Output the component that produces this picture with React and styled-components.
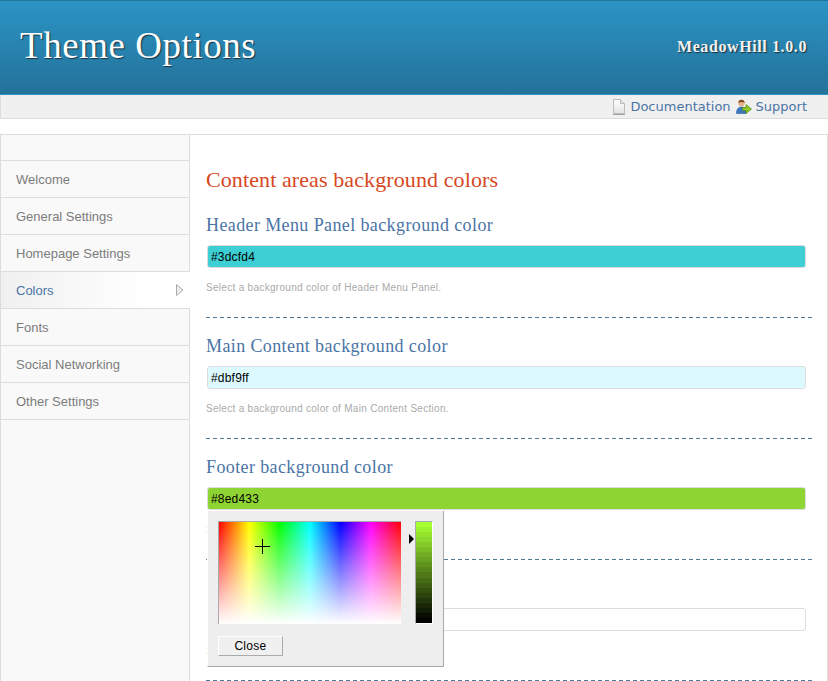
import React from 'react';
import styled, { createGlobalStyle } from 'styled-components';

const GlobalStyle = createGlobalStyle`
  html, body { margin: 0; padding: 0; background: #fff; overflow: hidden; }
  * { box-sizing: border-box; }
`;

const Page = styled.div`
  width: 828px;
  height: 681px;
  overflow: hidden;
  font-family: "Liberation Sans", Arial, sans-serif;
`;

const Header = styled.header`
  height: 95px;
  display: flex;
  align-items: center;
  justify-content: space-between;
  padding: 0 21px 0 20px;
  border-top: 1px solid #20749c;
  border-bottom: 1px solid #2e93c0;
  background: linear-gradient(to bottom, #2b94c4, #237299);
`;

const Title = styled.h1`
  margin: 0 0 4px;
  font: normal 37px/44px "Liberation Serif", serif;
  letter-spacing: 0.55px;
  color: #fff;
  text-shadow: 1px 1px 1px #1a3040;
`;

const Version = styled.div`
  margin-bottom: 2px;
  font: bold 16px/20px "Liberation Serif", serif;
  letter-spacing: 0.6px;
  color: #f2f2f2;
  text-shadow: 1px 1px 1px #1a3040;
`;

const SubBar = styled.nav`
  height: 24px;
  display: flex;
  align-items: center;
  justify-content: flex-end;
  gap: 5px;
  padding-right: 21px;
  background: #f0f0f0;
  border-left: 1px solid #ddd;
  border-bottom: 1px solid #ddd;
`;

const SubLink = styled.a`
  display: flex;
  align-items: center;
  gap: 4px;
  font: 13px/16px "DejaVu Sans", Verdana, sans-serif;
  color: #4a74a5;
`;

const Main = styled.div`
  margin-top: 15px;
  display: flex;
  height: 560px;
  border: 1px solid #ddd;
  border-bottom: 0;
`;

const Sidebar = styled.aside`
  flex: 0 0 189px;
  background: #f9f9f9;
  border-right: 1px solid #ddd;
  padding-top: 25px;
`;

const MenuItem = styled.div`
  position: relative;
  display: flex;
  align-items: center;
  padding-left: 15px;
  margin-right: ${(p) => (p.$active ? '-1px' : '0')};
  border-top: 1px solid #ddd;
  border-bottom: ${(p) => (p.$last ? '1px solid #ddd' : '0')};
  height: ${(p) => (p.$last ? '38px' : '37px')};
  font-size: 13px;
  color: ${(p) => (p.$active ? '#4a74a5' : '#7c7c7c')};
  background: ${(p) => (p.$active ? 'linear-gradient(to right, #f0f0f0, #fff 75%)' : 'transparent')};
`;

const ActiveArrow = styled.svg`
  position: absolute;
  right: 6px;
  top: 12px;
`;

const Content = styled.main`
  flex: 1;
  padding: 30px 15px 0 16px;
  background: #fff;
`;

const PanelTitle = styled.h2`
  margin: 0 0 2px;
  font: normal 22px/30px "Liberation Serif", serif;
  letter-spacing: 0.1px;
  color: #d8481e;
`;

const Section = styled.section`
  padding: 16px 0 22px;
  background: repeating-linear-gradient(to right, #4f7897 0 4px, transparent 4px 7px) left bottom / 100% 1px no-repeat;
`;

const SectionTitle = styled.h3`
  margin: 0 0 8px;
  font: normal 18px/24px "Liberation Serif", serif;
  letter-spacing: 0.39px;
  color: #4a74a5;
`;

const Field = styled.div`
  position: relative;
  margin: 0 6px 0 1px;
`;

const ColorInput = styled.input`
  display: block;
  width: 100%;
  height: 23px;
  padding: 0 3px;
  border: 1px solid #ddd;
  border-radius: 3px;
  outline: none;
  font: 12px/21px "Liberation Sans", Arial, sans-serif;
  letter-spacing: 0.2px;
  color: #000;
  background: ${(p) => p.$color};
`;

const Hint = styled.p`
  margin: 12px 0 0;
  font: 10px/16px "Liberation Sans", Arial, sans-serif;
  letter-spacing: 0.3px;
  color: #aaa;
`;

const Picker = styled.div`
  position: absolute;
  z-index: 2;
  left: 0;
  top: 24px;
  width: 237px;
  height: 156px;
  padding: 10px 0 0 10px;
  background: #eee;
  border-left: 1px solid #fff;
  border-right: 1px solid #aaa;
  border-bottom: 1px solid #aaa;
`;

const PickerRow = styled.div`
  display: flex;
  height: 103px;
`;

const Palette = styled.div`
  position: relative;
  width: 183px;
  height: 103px;
  border-top: 1px solid #aaa;
  border-left: 1px solid #aaa;
  background:
    linear-gradient(to bottom, rgba(255, 255, 255, 0), #fff),
    linear-gradient(to right, #f00, #ff0 16.67%, #0f0 33.33%, #0ff 50%, #00f 66.67%, #f0f 83.33%, #f00);
`;

const Crosshair = styled.svg`
  position: absolute;
  left: 36px;
  top: 17px;
`;

const SliderWrap = styled.div`
  position: relative;
  margin-left: 14px;
  width: 18px;
  height: 103px;
  display: flex;
  flex-direction: column;
  border-top: 1px solid #aaa;
  border-left: 1px solid #aaa;
  border-right: 1px solid #fff;
  border-bottom: 1px solid #fff;
`;

const Band = styled.div`
  flex: 1;
`;

const SliderArrow = styled.svg`
  position: absolute;
  left: -8px;
  top: 12px;
`;

const CloseButton = styled.button`
  display: block;
  margin-top: 12px;
  width: 65px;
  height: 20px;
  padding: 0;
  font: 12px/18px "Liberation Sans", Arial, sans-serif;
  letter-spacing: 0.3px;
  color: #000;
  background: #f0f0f0;
  border-top: 1px solid #fff;
  border-left: 1px solid #fff;
  border-right: 1px solid #aaa;
  border-bottom: 1px solid #aaa;
`;

const DocIcon = () => (
  <svg width="14" height="16" viewBox="0 0 14 16">
    <defs>
      <linearGradient id="docFill" x1="0" y1="0" x2="0" y2="1">
        <stop offset="0" stopColor="#fff" />
        <stop offset="1" stopColor="#e2e2e2" />
      </linearGradient>
    </defs>
    <path d="M1.5 .5H8.5L12.5 4.5V14.5H1.5Z" fill="url(#docFill)" stroke="#bcbcbc" />
    <path d="M8.5 .5V4.5H12.5" fill="#e4e4e4" stroke="#bcbcbc" />
    <path d="M1 15.5H13" stroke="#a0a0a0" />
  </svg>
);

const SupportIcon = () => (
  <svg width="16" height="16" viewBox="0 0 16 16">
    <path d="M.5 14.500C.5 10 2.500 8 5.500 8S10 10 10 14.500Z" fill="#3a78c0" stroke="#2a5a96" strokeWidth=".6" />
    <circle cx="5.500" cy="4" r="3.200" fill="#e3b089" />
    <path d="M2.300 4C2.300 -.5 8.700 -.5 8.700 4C7 2.500 4.500 2.500 2.300 4Z" fill="#7a4a20" />
    <path d="M6.500 8.500H10V5.500L15.500 10 10 14.500V11.500H6.500Z" fill="#8fca2a" stroke="#4c8410" strokeWidth=".7" />
  </svg>
);

const bands = Array.from({ length: 20 }, (_, i) => {
  const k = 1 - i / 19;
  return `rgb(${Math.round(166 * k)}, ${Math.round(255 * k)}, ${Math.round(51 * k)})`;
});

const menu = ['Welcome', 'General Settings', 'Homepage Settings', 'Colors', 'Fonts', 'Social Networking', 'Other Settings'];

const ColorPicker = () => (
  <Picker>
    <PickerRow>
      <Palette>
        <Crosshair width="15" height="15" viewBox="0 0 15 15">
          <path d="M7.500 0V15M0 7.500H15" stroke="#000" />
        </Crosshair>
      </Palette>
      <SliderWrap>
        {bands.map((color) => <Band key={color} style={{ background: color }} />)}
        <SliderArrow width="7" height="10" viewBox="0 0 7 10">
          <path d="M1 0L6 5 1 10Z" fill="#000" />
        </SliderArrow>
      </SliderWrap>
    </PickerRow>
    <CloseButton>Close</CloseButton>
  </Picker>
);

const ColorSection = ({ title, value, hint, open }) => (
  <Section>
    <SectionTitle>{title}</SectionTitle>
    <Field>
      <ColorInput $color={value === '#ffffff' ? '#fff' : value} defaultValue={value === '#ffffff' ? '' : value} />
      {open && <ColorPicker />}
    </Field>
    <Hint>{hint}</Hint>
  </Section>
);

export default function App() {
  return (
    <Page>
      <GlobalStyle />
      <Header>
        <Title>Theme Options</Title>
        <Version>MeadowHill 1.0.0</Version>
      </Header>
      <SubBar>
        <SubLink><DocIcon />Documentation</SubLink>
        <SubLink><SupportIcon />Support</SubLink>
      </SubBar>
      <Main>
        <Sidebar>
          {menu.map((item, i) => (
            <MenuItem key={item} $active={item === 'Colors'} $last={i === menu.length - 1}>
              {item}
              {item === 'Colors' && (
                <ActiveArrow width="8" height="12" viewBox="0 0 8 12">
                  <path d="M.5 .5L7 6 .5 11.500Z" fill="#eee" stroke="#aaa" />
                </ActiveArrow>
              )}
            </MenuItem>
          ))}
        </Sidebar>
        <Content>
          <PanelTitle>Content areas background colors</PanelTitle>
          <ColorSection title="Header Menu Panel background color" value="#3dcfd4" hint="Select a background color of Header Menu Panel." />
          <ColorSection title="Main Content background color" value="#dbf9ff" hint="Select a background color of Main Content Section." />
          <ColorSection title="Footer background color" value="#8ed433" hint="Select a background color of Footer." open />
          <ColorSection title="Sidebar background" value="#ffffff" hint="Select a background color." />
        </Content>
      </Main>
    </Page>
  );
}
